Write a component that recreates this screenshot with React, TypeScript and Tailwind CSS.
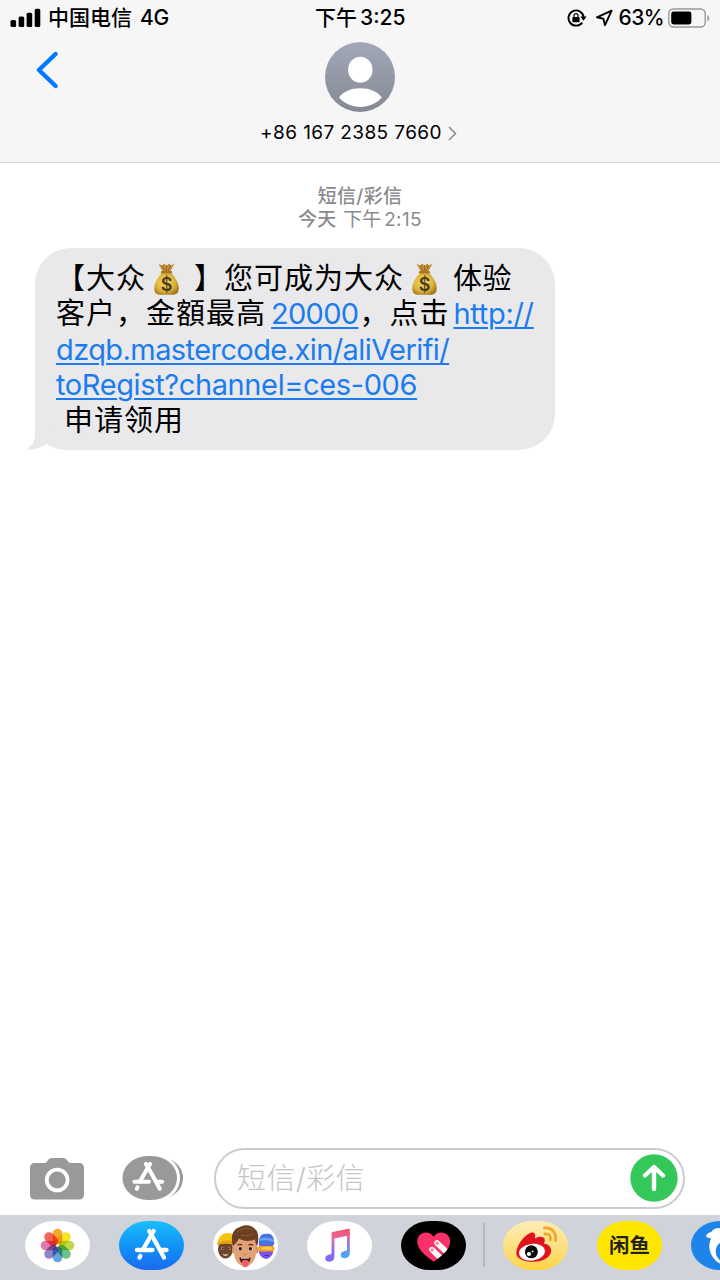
import type { ReactNode } from "react";

const StatusBar = () => (
    <div className="h-[35px] flex items-center relative font-medium text-[21px] text-black">
        <div className="flex items-center pl-[10px] w-[315px]">
            <svg width="31" height="20" viewBox="0 0 31 20">
                <rect x="0.5" y="12" width="5.6" height="7" rx="1.6" />
                <rect x="8.6" y="8.6" width="5.6" height="10.4" rx="1.6" />
                <rect x="16.6" y="4.7" width="5.6" height="14.3" rx="1.6" />
                <rect x="24.7" y="0.8" width="5.6" height="18.2" rx="1.6" />
            </svg>
            <span className="ml-[7px] pt-px">中国电信</span>
            <span className="ml-[8px] pt-px tracking-[-0.2px]">4G</span>
        </div>
        <div className="flex items-center pt-px">
            <span>下午</span>
            <span className="ml-[3px]">3:25</span>
        </div>
        <div className="ml-auto flex items-center pr-[9px]">
            <svg width="20" height="20" viewBox="0 0 20 20" fill="none">
                <path
                    d="M15.2 14.6A7.6 7.6 0 1 1 16.6 8.8"
                    stroke="#000"
                    strokeWidth="1.9"
                />
                <path d="M13.4 8.6h6.2l-3.1 4.2z" fill="#000" />
                <rect x="5.4" y="9" width="7.2" height="5.2" rx="0.8" fill="#000" />
                <path
                    d="M7 9.4V7.600a2 2 0 0 1 4 0v1.800"
                    stroke="#000"
                    strokeWidth="1.2"
                />
            </svg>
            <svg
                className="ml-[8px]"
                width="19"
                height="18"
                viewBox="0 0 19 18"
                fill="none"
            >
                <path
                    d="M16.600 1.700 1.900 8.300l6.500 1.500 1.600 6.400z"
                    stroke="#000"
                    strokeWidth="1.9"
                    strokeLinejoin="round"
                />
            </svg>
            <span className="ml-[5px] pt-px tracking-[-0.6px]">63%</span>
            <svg className="ml-[4px]" width="43" height="20" viewBox="0 0 43 20" fill="none">
                <rect
                    x="0.8"
                    y="1"
                    width="36.4"
                    height="18"
                    rx="4.5"
                    stroke="#999"
                    strokeWidth="1.4"
                />
                <rect x="3.2" y="3.6" width="20.2" height="12.8" rx="2.4" fill="#000" />
                <path d="M39.4 7v6.4c2.4-1 2.4-5.4 0-6.4z" fill="#999" />
            </svg>
        </div>
    </div>
);

const Header = () => (
    <header className="h-[163px] bg-[#f6f6f6] border-b border-[#d4d4d6]">
        <StatusBar />
        <div className="grid grid-cols-[1fr_auto_1fr] pt-[7px]">
            <svg
                className="ml-[35px] mt-[8px]"
                width="26"
                height="40"
                viewBox="0 0 26 40"
                fill="none"
            >
                <path
                    d="M20.600 4 3.900 20l16.700 16"
                    stroke="#007aff"
                    strokeWidth="4.4"
                    strokeLinecap="round"
                    strokeLinejoin="round"
                />
            </svg>
            <div className="flex flex-col items-center">
                <svg width="70" height="70" viewBox="0 0 70 70">
                    <defs>
                        <linearGradient id="avatar" x1="0" y1="0" x2="0" y2="1">
                            <stop offset="0" stopColor="#a3a8b9" />
                            <stop offset="1" stopColor="#858994" />
                        </linearGradient>
                    </defs>
                    <circle cx="35" cy="35" r="35" fill="url(#avatar)" />
                    <ellipse cx="35.3" cy="27.8" rx="12.2" ry="13" fill="#fff" />
                    <path
                        d="M14 55.600C18 49.600 26 46.300 35.200 46.300s17.600 3.300 21.600 9.300C51 62 43.500 65 35.200 65S20 62 14 55.600z"
                        fill="#fff"
                    />
                </svg>
                <div className="flex items-center h-[43px] pr-[3px]">
                    <span className="text-[19px] tracking-[0.4px]">+86 167 2385 7660</span>
                    <svg className="ml-[6px]" width="9" height="15" viewBox="0 0 9 15" fill="none">
                        <path d="M1 1l6.500 6.500L1 14" stroke="#8a8a8f" strokeWidth="1.500" />
                    </svg>
                </div>
            </div>
            <div />
        </div>
    </header>
);

const MoneyBag = () => (
    <svg
        className="inline-block w-[27px] h-[34px]"
        viewBox="0 0 26 34"
        role="img"
        aria-label="💰"
    >
        <defs>
            <radialGradient id="bag" cx="0.45" cy="0.45" r="0.6">
                <stop offset="0" stopColor="#f5d75c" />
                <stop offset="0.65" stopColor="#dfb53c" />
                <stop offset="1" stopColor="#a8781f" />
            </radialGradient>
        </defs>
        <path d="M5 2l4 1.500 1.500-2 2.500 2 3-2 1.500 2L21 1.500 16.500 10h-7z" fill="#c08f35" />
        <path d="M9 3l2.500 6M13 3.500V9M17 3l-2.500 6" stroke="#8e611c" strokeWidth="0.8" />
        <path
            d="M9 10.500h8c4.600 4.400 8.200 10 8.200 16 0 5-2.800 6.300-6.200 6.300H7c-3.400 0-6.200-1.300-6.200-6.300 0-6 3.600-11.600 8.200-16z"
            fill="url(#bag)"
        />
        <rect x="7.400" y="8.900" width="11.200" height="2.600" rx="1.300" fill="#a87727" />
        <text
            x="13"
            y="28.500"
            textAnchor="middle"
            fontSize="18"
            fontWeight="600"
            fill="#4b3a20"
            fontFamily="Inter, sans-serif"
        >
            $
        </text>
    </svg>
);

const Link = ({ children }: { children: ReactNode }) => (
    <a className="text-[#1b7cf0] underline decoration-2 underline-offset-[3px]">{children}</a>
);

const MessageBubble = () => (
    <div className="relative ml-[35px] w-[520px] h-[202px] rounded-[36px] rounded-bl-[30px] bg-[#e9e9eb] pl-[21px] pt-[13px] text-[29px] leading-[35.4px] text-black whitespace-nowrap">
        <svg
            className="absolute left-[-9px] bottom-0"
            width="36"
            height="32"
            viewBox="0 0 36 32"
        >
            <path d="M9 0v16c0 7-3 12.500-9 15.500 7 .7 14.500-1.200 21.500-5.700L36 14z" fill="#e9e9eb" />
        </svg>
        <div className="relative">
            <div className="flex items-center h-[35.4px]">
                <span className="tracking-[1px]">【大众</span>
                <span className="ml-[7px] flex">
                    <MoneyBag />
                </span>
                <span className="ml-[14px] tracking-[1px]">】您可成为大众</span>
                <span className="ml-[7px] flex">
                    <MoneyBag />
                </span>
                <span className="ml-[15px] tracking-[0.5px]">体验</span>
            </div>
            <div className="flex h-[35.4px]">
                <span className="tracking-[1px]">客户，金額最高</span>
                <span className="ml-[5px] tracking-[-0.7px]">
                    <Link>20000</Link>
                </span>
                <span className="tracking-[1px] ml-px">，点击</span>
                <span className="ml-[4px] tracking-[-0.3px]">
                    <Link>http://</Link>
                </span>
            </div>
            <div className="h-[35.4px] tracking-[-0.58px]">
                <Link>dzqb.mastercode.xin/aliVerifi/</Link>
            </div>
            <div className="h-[35.4px] tracking-[-0.38px]">
                <Link>toRegist?channel=ces-006</Link>
            </div>
            <div className="h-[35.4px] pl-[8px] tracking-[1px]">申请领用</div>
        </div>
    </div>
);

// Crossed strokes shared by the toolbar button and the App Store pill
const StoreMark = () => (
    <g stroke="#fff" strokeWidth="4.3" strokeLinecap="round" fill="none">
        <path d="M34.600 10 23.800 28.800" />
        <path d="M30.200 10 36 20" />
        <path d="M36.300 20.500 45 36.500" />
        <path d="M18 29h15.500M41.500 29H47.500" />
        <path d="M21.300 35l-.8 1.500" />
    </g>
);

const Toolbar = () => (
    <div className="flex items-center h-[73px] pl-[30px] pr-[35px]">
        <svg width="54" height="42" viewBox="0 0 54 42">
            <path
                d="M5 5h9c2 0 2.500-.8 3.500-2.200C18.800.8 19.800 0 22 0h11c2.200 0 3.200.8 4.500 2.800C38.500 4.200 39 5 41 5h8c3 0 5 2 5 5v26.500c0 3-2 5-5 5H5c-3 0-5-2-5-5V10c0-3 2-5 5-5z"
                fill="#999"
            />
            <circle cx="27.200" cy="22" r="10.400" fill="none" stroke="#fff" strokeWidth="3.800" />
        </svg>
        <svg className="ml-[38px] mb-[2px]" width="62" height="46" viewBox="0 0 62 46">
            <path
                d="M32 1c16 0 29 8.500 29 22S48 45 32 45z"
                fill="#999"
            />
            <path
                d="M27 -1.500c20 0 31 11 31 24.500S47 47.500 27 47.500z"
                fill="#fff"
            />
            <rect x="0.500" y="1" width="54.500" height="44" rx="25" ry="22" fill="#999" />
            <g transform="translate(-4.500 -0.500) scale(0.94)">
                <StoreMark />
            </g>
        </svg>
        <div className="ml-[30px] mb-px flex-1 h-[61px] rounded-full border-2 border-[#cbcbcf] bg-white flex items-center justify-between pl-[21px] pr-[5px]">
            <span className="text-[29px] font-light tracking-[0.4px] text-[#c5c5c7] pt-px">
                短信/彩信
            </span>
            <svg width="48" height="48" viewBox="0 0 48 48" fill="none">
                <circle cx="24" cy="24" r="23.700" fill="#34c759" />
                <path
                    d="M24 35V14M15 21.500l9-8.500 9 8.500"
                    stroke="#fff"
                    strokeWidth="4.400"
                    strokeLinecap="round"
                    strokeLinejoin="round"
                />
            </svg>
        </div>
    </div>
);

const petals = [
    "#f7a11b",
    "#f4e314",
    "#b7d63e",
    "#5fbd82",
    "#5b9bdb",
    "#8a7bc4",
    "#df6fa6",
    "#f2584a",
];

const PhotosIcon = () => (
    <svg width="65" height="49" viewBox="0 0 65 49">
        {petals.map((color, i) => (
            <rect
                key={color}
                x="27.700"
                y="7.700"
                width="9.600"
                height="15.600"
                rx="4.800"
                fill={color}
                opacity="0.92"
                className="mix-blend-multiply"
                transform={`rotate(${i * 45} 32.5 24.5)`}
            />
        ))}
    </svg>
);

const AppStoreIcon = () => (
    <svg width="65" height="49" viewBox="0 0 65 49">
        <StoreMark />
    </svg>
);

const MemojiIcon = () => (
    <svg width="65" height="49" viewBox="0 0 65 49">
        <ellipse cx="12.500" cy="28" rx="7.500" ry="9.500" fill="#704429" />
        <path d="M4.500 24c-.5-7 4-12 10-12 4 0 6 2 7 4v8c-6-2-11-2-17 0z" fill="#f8c414" />
        <path d="M4.500 22c6-3 11-3 17-1v3c-6-2-11-2-17 0z" fill="#e0a30d" />
        <circle cx="9.500" cy="27.500" r="1.200" fill="#e9ded8" />
        <circle cx="9.700" cy="27.500" r="0.900" fill="#24130a" />
        <circle cx="16" cy="27.500" r="1.200" fill="#e9ded8" />
        <circle cx="15.800" cy="27.500" r="0.900" fill="#24130a" />
        <path d="M9.500 33c2.500.8 4 .8 6-.3-.5 2.300-5 3-6 .3z" fill="#f4ece8" />
        <ellipse cx="53" cy="28" rx="7.500" ry="10" fill="#7d51e6" />
        <path d="M46 24c-1-7 2-12 8-11 4-1 8 2 7 11z" fill="#4573df" />
        <path d="M46 18c5-2 10-2 15 1l-.5 2c-5-2-9-2-14-1z" fill="#6aa0f4" />
        <rect x="45" y="25" width="16.500" height="5.500" rx="2.500" fill="#f6a623" />
        <rect x="49" y="26" width="10" height="2.400" rx="1.200" fill="#ffc94c" />
        <path d="M51.500 34.500h4" stroke="#4a249f" strokeWidth="1.200" />
        <ellipse cx="21.200" cy="29" rx="2.200" ry="3.500" fill="#d59268" />
        <ellipse cx="43.300" cy="29" rx="2.200" ry="3.500" fill="#d59268" />
        <path
            d="M21 22c0-8 22-8 22 0v9c0 8-5 14.500-11 14.500S21 39 21 31z"
            fill="#e3a276"
        />
        <path
            d="M20 26C17 15 20 8 27 6c5-3 12-2 15 2 4 3 4 11 2 18-1-2.500-1.700-5-2.200-7.500-6 2.500-12 1.500-16-1-1 4-4.300 5-5.800 8.500z"
            fill="#6b3f22"
        />
        <path d="M24 11c5-4 10-5 16-2M28 14c4 1 8 1 12-1" stroke="#8d5932" fill="none" />
        <path
            d="M24.500 24.200c1.500-1 3.200-1 4.700-.3M35.500 23.900c1.500-.7 3.200-.7 4.700.3"
            stroke="#5b3118"
            strokeWidth="1.200"
            fill="none"
        />
        <ellipse cx="27" cy="27.800" rx="2.200" ry="1.800" fill="#fff" />
        <ellipse cx="37.600" cy="27.800" rx="2.200" ry="1.800" fill="#fff" />
        <circle cx="27.200" cy="27.800" r="1.700" fill="#2c1a12" />
        <circle cx="37.400" cy="27.800" r="1.700" fill="#2c1a12" />
        <path d="M30.500 33c1 .9 2.500.9 3.500 0" stroke="#bd7750" fill="none" />
        <path d="M26.500 36.500h11c0 4-2.500 6.500-5.500 6.500s-5.500-2.500-5.500-6.500z" fill="#4f1513" />
        <path d="M28 36.500h8v1.100h-8z" fill="#fff" />
        <path d="M29 40c2-1.200 4.500-1.200 6.500 0v3c0 4.200-6.500 4.200-6.500 0z" fill="#ee6267" />
    </svg>
);

const MusicIcon = () => (
    <svg width="65" height="49" viewBox="0 0 65 49">
        <defs>
            <linearGradient id="note" gradientUnits="userSpaceOnUse" x1="36" y1="8" x2="31" y2="40">
                <stop offset="0" stopColor="#f9546a" />
                <stop offset="0.35" stopColor="#e568a8" />
                <stop offset="0.7" stopColor="#8a6bf2" />
                <stop offset="1" stopColor="#7f68f8" />
            </linearGradient>
            <linearGradient id="noteRight" gradientUnits="userSpaceOnUse" x1="40" y1="14" x2="40" y2="36">
                <stop offset="0" stopColor="#f0608f" />
                <stop offset="0.5" stopColor="#8b7ff0" />
                <stop offset="1" stopColor="#42aaf5" />
            </linearGradient>
        </defs>
        <g transform="translate(-1 0)">
            <path
                d="M41 12h2.800v20c0 3-1.900 5.200-5.100 5.200-2.500 0-4-1.300-4-3.300 0-2.400 1.900-3.400 4.400-3.800 1.500-.3 1.900-.6 1.900-2z"
                fill="url(#noteRight)"
            />
            <path
                d="M25.600 12.500c0-.8.400-1.200 1.100-1.400l15.700-3.400c.8-.2 1.400.2 1.400 1v5.600l-15.400 3.300v17.700c0 3.300-1.900 5.400-5.100 5.400-2.400 0-4-1.300-4-3.300 0-2.300 1.900-3.300 4.400-3.800 1.500-.3 1.900-.7 1.900-2z"
                fill="url(#note)"
            />
        </g>
    </svg>
);

const HeartIcon = () => (
    <svg width="65" height="49" viewBox="0 0 65 49">
        <defs>
            <clipPath id="heart">
                <path d="M32.700 40.800C25 35 16.300 28.500 16.300 20.500c0-5.300 3.900-9 8.500-9 3.400 0 6.200 1.500 7.900 4.300 1.700-2.800 4.500-4.300 7.900-4.300 4.600 0 8.500 3.700 8.500 9 0 8-8.700 14.500-16.400 20.300z" />
            </clipPath>
        </defs>
        <g clipPath="url(#heart)">
            <rect width="65" height="49" fill="#fc3068" />
            <g stroke="#fff" strokeWidth="5.600" strokeLinecap="round">
                <path d="M36 22l16 15" />
                <path d="M31 28.600l14 14" />
            </g>
            <g fill="#ff7d9f">
                <circle cx="36" cy="22.200" r="1.700" />
                <circle cx="31.200" cy="29" r="1.700" />
            </g>
        </g>
    </svg>
);

const WeiboIcon = () => (
    <svg width="65" height="49" viewBox="0 0 65 49" fill="none">
        <path
            d="M13.300 32.500c0-8 7.500-18 14-20.500 4-1.500 6 1.300 4.500 5.300 4-2.300 9.500-2.500 10 1.200.2 1.500-.3 2.800-.9 4 4 .6 7.300 3 7.300 7.200 0 6-8 11.100-18 11.100-9.500 0-16.900-3.300-16.900-8.300z"
            fill="#df1420"
        />
        <ellipse cx="29" cy="31.200" rx="13" ry="8.300" fill="#fff" transform="rotate(-7 29 31.200)" />
        <circle cx="28.400" cy="30.800" r="6.500" fill="#0b0b0b" />
        <circle cx="26" cy="33" r="2.100" fill="#fff" />
        <circle cx="29.600" cy="30.400" r="0.900" fill="#fff" />
        <path
            d="M41.500 7C49 6.300 53.800 12 52.500 19.500M42 13c4-.5 6.400 2.300 5.300 6"
            stroke="#f7a428"
            strokeWidth="2.800"
            strokeLinecap="round"
        />
    </svg>
);

const DolphinIcon = () => (
    <svg width="65" height="49" viewBox="0 0 65 49">
        <path
            d="M15 15.500c.5-2.500 2.500-4 5.300-4.500C21.800 7.500 26 6.500 30 7l8 1v35h-8C23 40 18 32 18.300 24.500c.1-2.500.8-5 1.900-7.300-1.800.2-3.800-.4-5.200-1.700z"
            fill="#fff"
        />
        <path d="M38 19c-8 0-13.300 5-13.300 11 0 4 2 7.500 5 10l8.300 1z" fill="#1f84ea" />
        <path d="M38 27c-6 0-10 3-8.500 7 .8 2 4.500 3.500 8.500 4z" fill="#fff" />
    </svg>
);

const Pill = ({ className, children }: { className: string; children: ReactNode }) => (
    <div
        className={`w-[65px] h-[49px] shrink-0 rounded-[29px/24.5px] overflow-hidden isolate ${className}`}
    >
        {children}
    </div>
);

const AppStrip = () => (
    <div className="h-[65px] bg-[#d0d3da] flex items-start pt-[6px] pl-[25px] overflow-hidden">
        <div className="flex gap-[29px] shrink-0">
            <Pill className="bg-white">
                <PhotosIcon />
            </Pill>
            <Pill className="bg-linear-to-b from-[#1cbdfa] to-[#1b69f0]">
                <AppStoreIcon />
            </Pill>
            <Pill className="bg-white">
                <MemojiIcon />
            </Pill>
            <Pill className="bg-white">
                <MusicIcon />
            </Pill>
            <Pill className="bg-black">
                <HeartIcon />
            </Pill>
        </div>
        <div className="ml-[17px] mr-[18px] mt-[2px] w-[2px] h-[44px] bg-[#b4b7be] shrink-0" />
        <div className="flex gap-[29px] shrink-0">
            <Pill className="bg-linear-to-b from-[#fdedb6] to-[#fed33e]">
                <WeiboIcon />
            </Pill>
            <Pill className="bg-[#ffe600] flex items-center justify-center pt-[2px] text-[20.5px] font-bold text-[#222]">
                闲鱼
            </Pill>
            <Pill className="bg-[#1f84ea]">
                <DolphinIcon />
            </Pill>
        </div>
    </div>
);

const App = () => (
    <div className="w-[720px] h-[1280px] bg-white flex flex-col overflow-hidden font-[Inter,'Noto_Sans_CJK_SC',sans-serif]">
        <Header />
        <main className="flex-1">
            <div className="pt-[23px] h-[85px] flex flex-col items-center text-[19px] leading-[22.5px] text-[#8a8a8e]">
                <div className="font-medium tracking-[0.3px]">短信/彩信</div>
                <div className="flex">
                    <span className="font-medium">今天</span>
                    <span className="ml-[7px]">下午</span>
                    <span className="ml-[3px] tracking-[0.3px]">2:15</span>
                </div>
            </div>
            <MessageBubble />
        </main>
        <Toolbar />
        <AppStrip />
    </div>
);

export default App;
